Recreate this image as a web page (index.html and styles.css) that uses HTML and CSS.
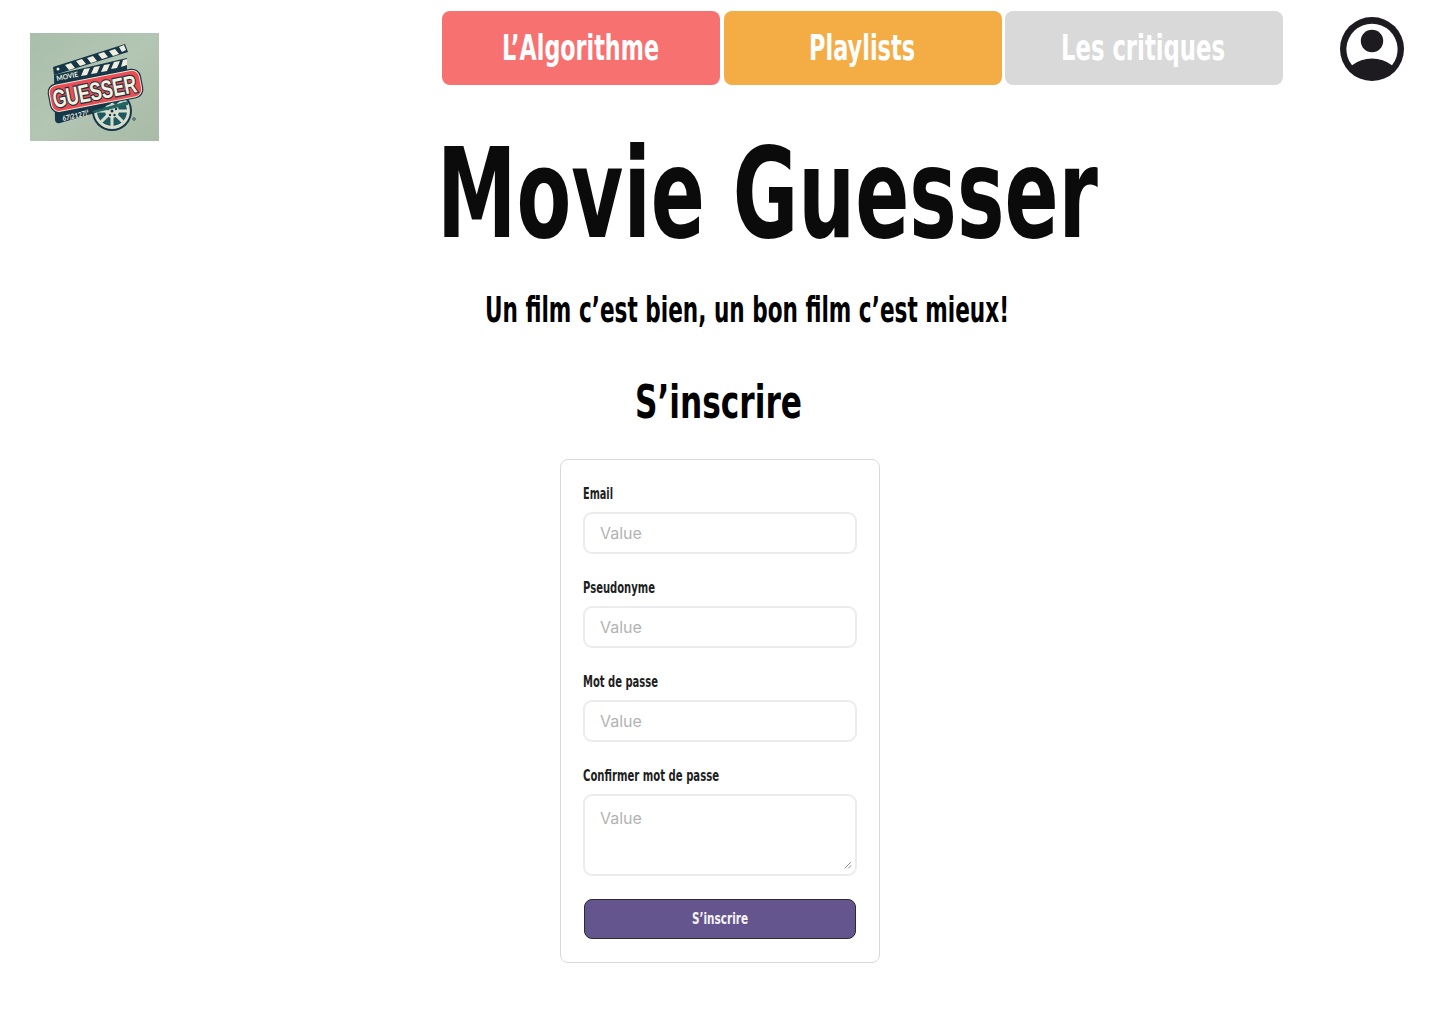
FILE: index.html
```html
<!DOCTYPE html>
<html lang="fr">
<head>
<meta charset="utf-8">
<title>Movie Guesser</title>
<link rel="stylesheet" href="styles.css">
</head>
<body>
<header class="header">
  <a class="logo" href="#">
    <svg width="129" height="108" viewBox="0 0 129 108" role="img" aria-label="Movie Guesser">
      <defs>
        <linearGradient id="felt" x1="0" y1="0" x2="1" y2="1"><stop offset="0" stop-color="#a9bfaa"/><stop offset=".5" stop-color="#b3c5b3"/><stop offset="1" stop-color="#a8bba6"/></linearGradient>
      </defs>
      <rect width="129" height="108" fill="url(#felt)"/>
      <circle cx="82" cy="78" r="20" fill="#153747"/>
      <circle cx="82" cy="78" r="18" fill="#d9ddce"/>
      <circle cx="82" cy="78" r="15" fill="#1d5961"/>
      <g stroke="#d9ddce" stroke-width="3"><path d="M82 63v30M67 78h30M71.400 67.400l21.200 21.200M71.400 88.600l21.200-21.200"/></g>
      <circle cx="82" cy="78" r="7" fill="#d9ddce"/>
      <g fill="#153747"><circle cx="82" cy="78" r="1.500"/><circle cx="78" cy="76" r="1.200"/><circle cx="86" cy="76" r="1.200"/><circle cx="80" cy="82" r="1.200"/><circle cx="84.500" cy="82" r="1.200"/></g>
      <circle cx="104" cy="86" r="1.300" fill="none" stroke="#153747" stroke-width=".8"/>
      <path d="M24 42l73-17v35l-32 20-35 10q-4 1-5-3z" fill="#153747"/>
      <path d="M62 78l36-10v4l-34 8z" fill="#22665f"/>
      <path d="M23 34l72-23 3 8-64 20-10 3z" fill="#153747"/>
      <g fill="#f1eee0"><path d="M35 32l6-2 4 5-6 2zM46 28l6-2 4 5-6 2zM57 25l6-2 4 5-6 2zM68 21l6-2 4 5-6 2zM79 18l6-2 4 5-6 2zM89 14l5-2 2 5-4 2z"/><path d="M54 36l6-1-3 7-6 1zM64 34l6-1-3 7-6 1zM74 32l6-1-3 7-6 1zM84 29l6-1-3 7-6 1zM93 27l4-1v6l-6 2z"/><circle cx="28" cy="36" r="1.500"/></g>
      <g transform="rotate(-11 65 58)">
        <rect x="18" y="43" width="95" height="30" rx="9" fill="#153747"/>
        <rect x="19.200" y="44.200" width="92.600" height="27.600" rx="8" fill="#eee4d5"/>
        <rect x="20.200" y="45.200" width="90.600" height="25.600" rx="7" fill="#ef4b52"/>
        <text class="logo-name" x="22" y="67" textLength="85" lengthAdjust="spacingAndGlyphs">GUESSER</text>
      </g>
      <text class="logo-small" transform="rotate(-12 27 48)" x="27" y="48" textLength="22" lengthAdjust="spacingAndGlyphs">MOVIE</text>
      <text class="logo-small" transform="rotate(-13 33 88)" x="33" y="88" textLength="27" lengthAdjust="spacingAndGlyphs">67|2127|²</text>
    </svg>
  </a>
  <nav class="nav">
    <a class="tab tab-algo" href="#"><svg class="display" width="278" height="74"><text x="60" y="48.500" textLength="157" lengthAdjust="spacingAndGlyphs">L’Algorithme</text></svg></a>
    <a class="tab tab-lists" href="#"><svg class="display" width="278" height="74"><text x="85" y="48.500" textLength="106" lengthAdjust="spacingAndGlyphs">Playlists</text></svg></a>
    <a class="tab tab-reviews" href="#"><svg class="display" width="278" height="74"><text x="56" y="48.500" textLength="164" lengthAdjust="spacingAndGlyphs">Les critiques</text></svg></a>
  </nav>
  <a class="account" href="#" aria-label="Compte">
    <svg width="64" height="64" viewBox="0 0 64 64"><circle cx="32" cy="32" r="32" fill="#1d1b20"/><path d="M12 48.300A25.600 25.600 0 1 1 52 48.300Q43 41.600 32 41.600T12 48.300z" fill="#fff"/><circle cx="32" cy="24" r="11.200" fill="#1d1b20"/></svg>
  </a>
</header>
<main class="main">
  <h1 class="title"><svg class="display" width="660" height="130"><text x="-5" y="106.500" textLength="661" lengthAdjust="spacingAndGlyphs">Movie Guesser</text></svg></h1>
  <p class="tagline"><svg class="display" width="524" height="44"><text x="-1" y="34.500" textLength="524" lengthAdjust="spacingAndGlyphs">Un film c’est bien, un bon film c’est mieux!</text></svg></p>
  <h2 class="heading"><svg class="display" width="168" height="50"><text x="-1" y="42" textLength="167" lengthAdjust="spacingAndGlyphs">S’inscrire</text></svg></h2>
  <form class="card">
    <div class="field"><label class="label" for="email"><svg class="display" width="272" height="22"><text x="-1" y="16" textLength="30" lengthAdjust="spacingAndGlyphs">Email</text></svg></label><input class="input" id="email" placeholder="Value"></div>
    <div class="field"><label class="label" for="pseudo"><svg class="display" width="272" height="22"><text x="-1" y="16" textLength="72" lengthAdjust="spacingAndGlyphs">Pseudonyme</text></svg></label><input class="input" id="pseudo" placeholder="Value"></div>
    <div class="field"><label class="label" for="password"><svg class="display" width="272" height="22"><text x="-1" y="16" textLength="75" lengthAdjust="spacingAndGlyphs">Mot de passe</text></svg></label><input class="input" id="password" placeholder="Value"></div>
    <div class="field"><label class="label" for="confirm"><svg class="display" width="272" height="22"><text x="-1" y="16" textLength="136" lengthAdjust="spacingAndGlyphs">Confirmer mot de passe</text></svg></label>
      <div class="area-wrap"><textarea class="input area" id="confirm" placeholder="Value"></textarea><svg class="grip" width="8" height="8" viewBox="0 0 8 8"><path d="M.7 7.300l6-6M4.200 7.300l3-3" fill="none" stroke="#8c8c8c"/></svg></div>
    </div>
    <button class="submit" type="button"><svg class="display" width="58" height="22"><text x="1" y="16" textLength="56" lengthAdjust="spacingAndGlyphs">S’inscrire</text></svg></button>
  </form>
</main>
</body>
</html>
```
FILE: styles.css
```css
* { box-sizing: border-box; }

body {
  margin: 0;
  height: 1024px;
  overflow: hidden;
  background: #fff;
  font-family: Inter, sans-serif;
}

svg { display: block; }

.header {
  display: flex;
  align-items: flex-start;
  height: 130px;
  padding: 11px 36px 0 30px;
}

.logo { width: 129px; padding-top: 22px; }
.logo svg { overflow: visible; }
.logo-name { font: 700 25px "Liberation Sans Narrow", "Liberation Sans", sans-serif; fill: #f7f1df; stroke: #153747; stroke-width: 2.5px; paint-order: stroke; }
.logo-small { font: 700 7px Lato, sans-serif; fill: #f1eee0; }

.nav { display: flex; gap: 4px; margin-left: 283px; }
.tab { width: 278px; height: 74px; border-radius: 8px; }
.tab-algo { background: #f87171; }
.tab-lists { background: #f4ad45; }
.tab-reviews { background: #d9d9d9; margin-left: -1px; }

.account { margin: 6px 0 0 auto; }

.display {
  overflow: visible;
  font-family: "DejaVu Sans", sans-serif;
  font-weight: 700;
  fill: currentColor;
}
.tab .display { font-size: 35px; color: #fff; }

.main { display: flex; flex-direction: column; }
.title { margin: 0 0 0 442px; height: 130px; color: #0b0b0b; }
.title .display { font-size: 125px; }
.tagline { margin: 27px 0 0 486px; height: 44px; color: #000; }
.tagline .display { font-size: 35px; }
.heading { margin: 45px 0 0 636px; height: 50px; color: #000; }
.heading .display { font-size: 47px; }

.card {
  display: flex;
  flex-direction: column;
  gap: 24px;
  width: 320px;
  height: 504px;
  margin: 33px 0 0 560px;
  padding: 23px;
  border: 1px solid #d9d9d9;
  border-radius: 8px;
}
.field { display: flex; flex-direction: column; gap: 8px; }
.label { height: 22px; color: #1e1e1e; }
.label .display { font-size: 15px; }

.input {
  display: block;
  width: 274px;
  height: 42px;
  margin: -1px;
  padding: 0 15px;
  border: 2px solid #ececec;
  border-radius: 9px;
  background: #fff;
  font: 400 16px Inter, sans-serif;
}
.input::placeholder { color: #b3b3b3; opacity: 1; }
.area-wrap { position: relative; height: 80px; }
.area { height: 82px; padding-top: 11px; line-height: 22px; resize: none; }
.grip { position: absolute; right: 4px; bottom: 6px; }

.submit {
  display: flex;
  align-items: center;
  justify-content: center;
  height: 40px;
  padding: 0;
  border: 1px solid #2c2c2c;
  border-radius: 8px;
  background: #65558f;
  color: #f5f5f5;
}
.submit .display { font-size: 15px; }
```
